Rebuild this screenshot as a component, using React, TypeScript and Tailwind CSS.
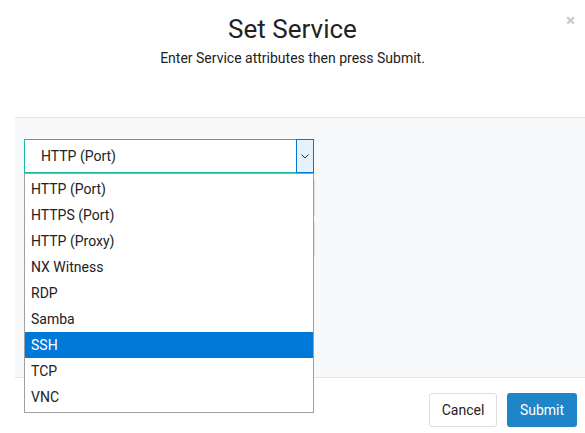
const options = [
  "HTTP (Port)",
  "HTTPS (Port)",
  "HTTP (Proxy)",
  "NX Witness",
  "RDP",
  "Samba",
  "SSH",
  "TCP",
  "VNC",
];

export default function App() {
  return (
    <div
      className="relative h-[433px] w-[585px] overflow-hidden bg-white text-[#222]"
      style={{ fontFamily: "Roboto, 'Liberation Sans', sans-serif" }}
    >
      <button className="absolute right-[10px] top-[12px] text-[17px] font-bold leading-none text-[#c8c8c8]">
        ×
      </button>

      <header className="h-[117px] pt-[12px] text-center">
        <h1 className="text-[26px] leading-[34px]">Set Service</h1>
        <p className="mt-[2px] text-[14px] leading-[20px]">
          Enter Service attributes then press Submit.
        </p>
      </header>

      <section className="ml-[15px] h-[261px] border-y border-[#e5e5e5] bg-[#f8f9fa] pl-[9px] pt-[21px]">
        <div className="relative w-[290px]">
          <div className="relative flex h-[34px] items-center border border-[#1abc9c] bg-white pl-[16px] text-[14px]">
            HTTP (Port)
            <span className="absolute right-[-1px] top-[-1px] flex h-[34px] w-[18px] items-center justify-center border border-[#0078d7] bg-[#e5f1fb]">
              <svg width="8" height="5" viewBox="0 0 8 5" fill="none">
                <path d="M0.5 0.5 L4 4 L7.5 0.5" stroke="#333" strokeWidth="1" />
              </svg>
            </span>
          </div>

          <div className="mt-[8px] flex flex-col gap-[7px]">
            <div className="h-[34px] w-[291px] border border-[#ddd] bg-white" />
            <div className="h-[34px] w-[291px] border border-[#ddd] bg-white" />
          </div>

          <ul className="absolute left-0 top-[34px] z-10 w-[290px] border border-[#a0a0a0] bg-white pb-[2px] pt-[2px] text-[14px]">
            {options.map((o) => (
              <li
                key={o}
                className={
                  "flex h-[26px] items-center pl-[6px] " +
                  (o === "SSH" ? "bg-[#0078d7] text-white" : "")
                }
              >
                {o}
              </li>
            ))}
          </ul>
        </div>
      </section>

      <footer className="flex justify-end gap-[10px] pr-[8px] pt-[15px] text-[14px]">
        <button className="h-[34px] w-[68px] rounded-[3px] border border-[#ddd] bg-white">
          Cancel
        </button>
        <button className="h-[34px] w-[70px] rounded-[3px] bg-[#1e86c8] text-white">
          Submit
        </button>
      </footer>
    </div>
  );
}
